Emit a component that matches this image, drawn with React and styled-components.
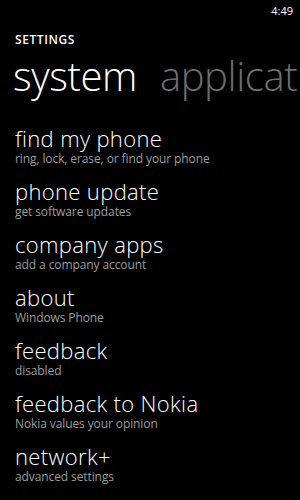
import styled, { createGlobalStyle } from "styled-components";

const GlobalStyle = createGlobalStyle`
  html, body {
    margin: 0;
    padding: 0;
    background: #000;
  }
  body {
    font-family: "Open Sans", "Noto Sans", sans-serif;
    color: #fff;
    -webkit-font-smoothing: antialiased;
  }
`;

const Screen = styled.div`
  width: 300px;
  height: 500px;
  background: #000;
  overflow: hidden;
`;

const StatusBar = styled.div`
  height: 20px;
  box-sizing: border-box;
  padding: 4px 7px 0 0;
  display: flex;
  justify-content: flex-end;
  font-size: 11px;
  line-height: 14px;
  color: #fff;
`;

const AppTitle = styled.div`
  margin: 12px 0 0 15px;
  font-size: 12px;
  line-height: 16px;
  font-weight: 600;
  letter-spacing: 0.6px;
`;

const Pivot = styled.div`
  margin: 4px 0 0 13px;
  display: flex;
  gap: 23px;
  white-space: nowrap;
  font-size: 40px;
  line-height: 48px;
  font-weight: 300;
  letter-spacing: -0.4px;
`;

const PivotItem = styled.span`
  color: ${(p) => (p.$active ? "#fff" : "#6e6e6e")};
`;

const List = styled.div`
  margin: 26px 0 0 15px;
  display: flex;
  flex-direction: column;
  gap: 12px;
`;

const Item = styled.div`
  display: flex;
  flex-direction: column;
`;

const Title = styled.div`
  font-size: 22px;
  line-height: 25px;
  font-weight: 300;
  letter-spacing: 0.35px;
  color: #fff;
`;

const Sub = styled.div`
  font-size: 12px;
  line-height: 16px;
  letter-spacing: -0.1px;
  color: #9d9d9d;
`;

const items = [
  ["find my phone", "ring, lock, erase, or find your phone"],
  ["phone update", "get software updates"],
  ["company apps", "add a company account"],
  ["about", "Windows Phone"],
  ["feedback", "disabled"],
  ["feedback to Nokia", "Nokia values your opinion"],
  ["network+", "advanced settings"],
];

export default function App() {
  return (
    <Screen>
      <GlobalStyle />
      <StatusBar>4:49</StatusBar>
      <AppTitle>SETTINGS</AppTitle>
      <Pivot>
        <PivotItem $active>system</PivotItem>
        <PivotItem>applications</PivotItem>
      </Pivot>
      <List>
        {items.map(([t, s]) => (
          <Item key={t}>
            <Title>{t}</Title>
            <Sub>{s}</Sub>
          </Item>
        ))}
      </List>
    </Screen>
  );
}
